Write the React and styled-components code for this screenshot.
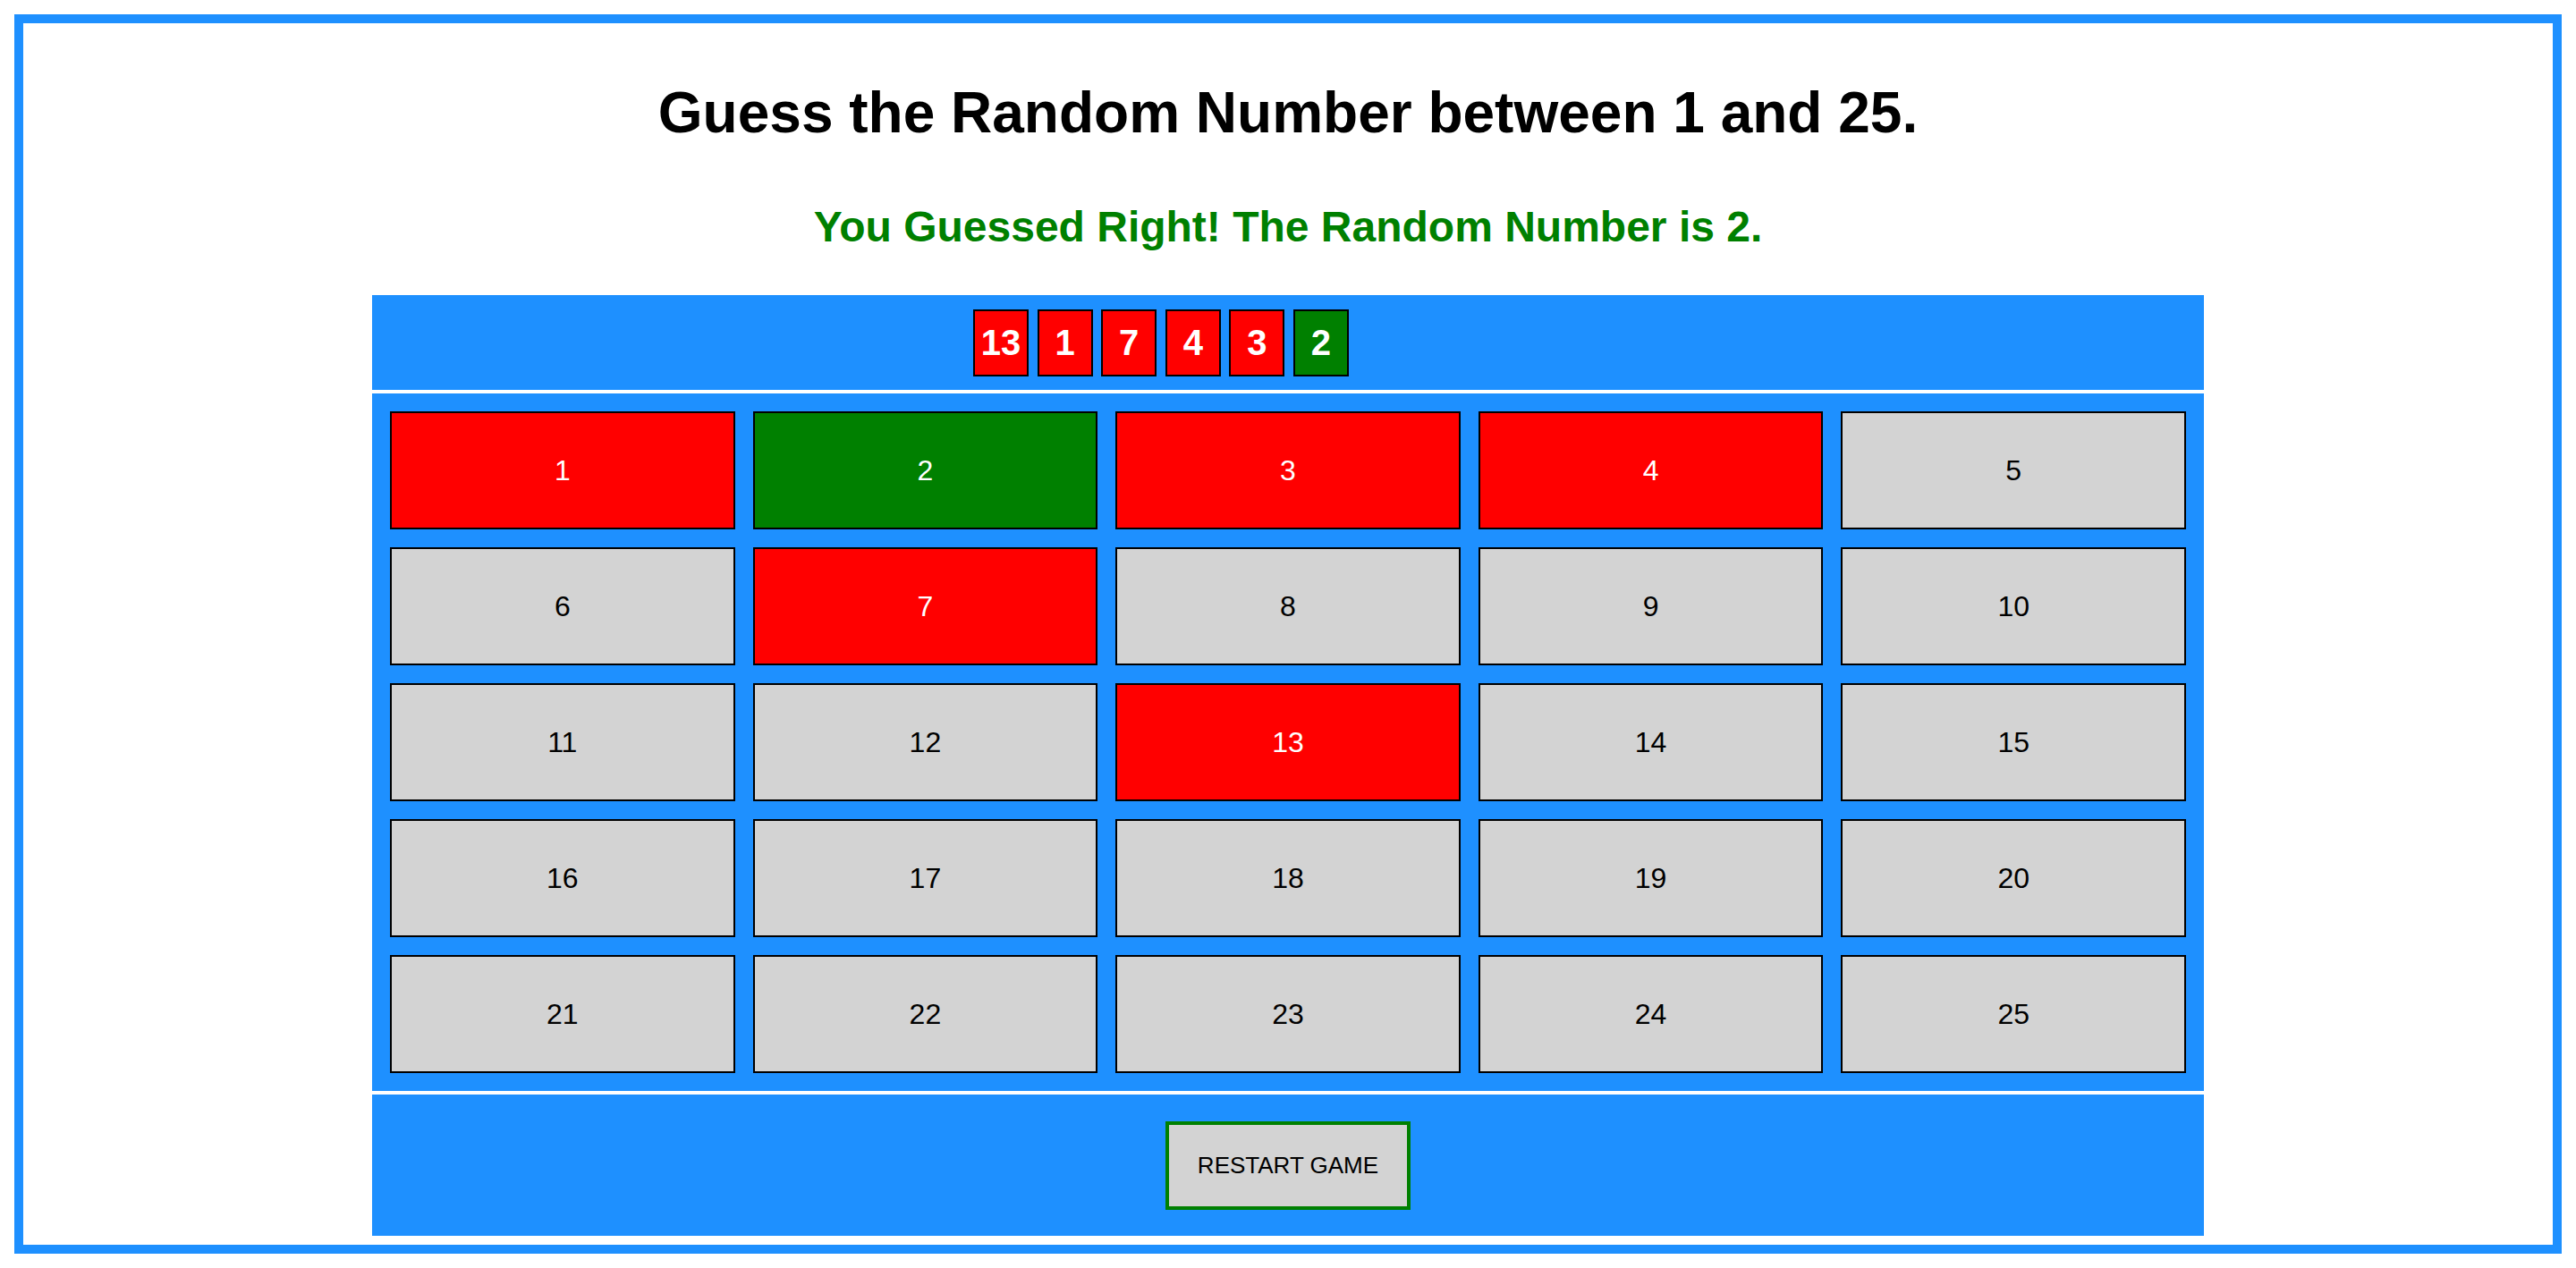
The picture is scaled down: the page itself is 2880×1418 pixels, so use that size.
import React from 'react';
import styled, { createGlobalStyle } from 'styled-components';

const GlobalStyle = createGlobalStyle`
  body {
    margin: 16px;
    font-family: "Liberation Sans", Arial, sans-serif;
    background: #ffffff;
  }
`;

const Frame = styled.div`
  border: 10px solid #1e90ff;
  display: flex;
  flex-direction: column;
  align-items: center;
`;

const Title = styled.h1`
  font-size: 64px;
  font-weight: bold;
  color: #000;
  margin: 63px 0 0;
`;

const Status = styled.h2`
  font-size: 48px;
  font-weight: bold;
  color: ${props => (props.win ? '#008000' : '#ff0000')};
  margin: 63px 0 49px;
`;

const Board = styled.div`
  width: 2048px;
  display: flex;
  flex-direction: column;
  gap: 4px;
  margin-bottom: 10px;
`;

const HistoryBar = styled.div`
  background: #1e90ff;
  height: 106px;
  display: flex;
  align-items: center;
  gap: 9.6px;
  padding-left: 672px;
  box-sizing: border-box;
`;

const Chip = styled.div`
  width: 62px;
  height: 75px;
  box-sizing: border-box;
  border: 2px solid #000;
  background: ${props => (props.right ? '#008000' : '#ff0000')};
  color: #fff;
  font-size: 40px;
  font-weight: bold;
  display: flex;
  align-items: center;
  justify-content: center;
`;

const Grid = styled.div`
  background: #1e90ff;
  display: grid;
  grid-template-columns: repeat(5, 1fr);
  gap: 20px;
  padding: 20px;
`;

const Tile = styled.button`
  height: 132px;
  border: 2px solid #000;
  border-radius: 0;
  font-family: "Liberation Sans", Arial, sans-serif;
  font-size: 32px;
  background: ${props =>
    props.state === 'right' ? '#008000' : props.state === 'wrong' ? '#ff0000' : '#d3d3d3'};
  color: ${props => (props.state ? '#fff' : '#000')};
  cursor: pointer;
`;

const Footer = styled.div`
  background: #1e90ff;
  height: 158px;
  display: flex;
  align-items: center;
  justify-content: center;
`;

const RestartButton = styled.button`
  border: 4px solid #008000;
  background: #d3d3d3;
  color: #000;
  font-family: "Liberation Sans", Arial, sans-serif;
  font-size: 26px;
  padding: 30px 32px;
  border-radius: 0;
  cursor: pointer;
`;

const answer = 2;
const guesses = [13, 1, 7, 4, 3, 2];

export default function App() {
  const tiles = Array.from({ length: 25 }, (_, i) => i + 1);
  return (
    <>
      <GlobalStyle />
      <Frame>
        <Title>Guess the Random Number between 1 and 25.</Title>
        <Status win>You Guessed Right! The Random Number is {answer}.</Status>
        <Board>
          <HistoryBar>
            {guesses.map(g => (
              <Chip key={g} right={g === answer}>{g}</Chip>
            ))}
          </HistoryBar>
          <Grid>
            {tiles.map(n => {
              const state = !guesses.includes(n) ? undefined : n === answer ? 'right' : 'wrong';
              return (
                <Tile key={n} state={state}>{n}</Tile>
              );
            })}
          </Grid>
          <Footer>
            <RestartButton>RESTART GAME</RestartButton>
          </Footer>
        </Board>
      </Frame>
    </>
  );
}
